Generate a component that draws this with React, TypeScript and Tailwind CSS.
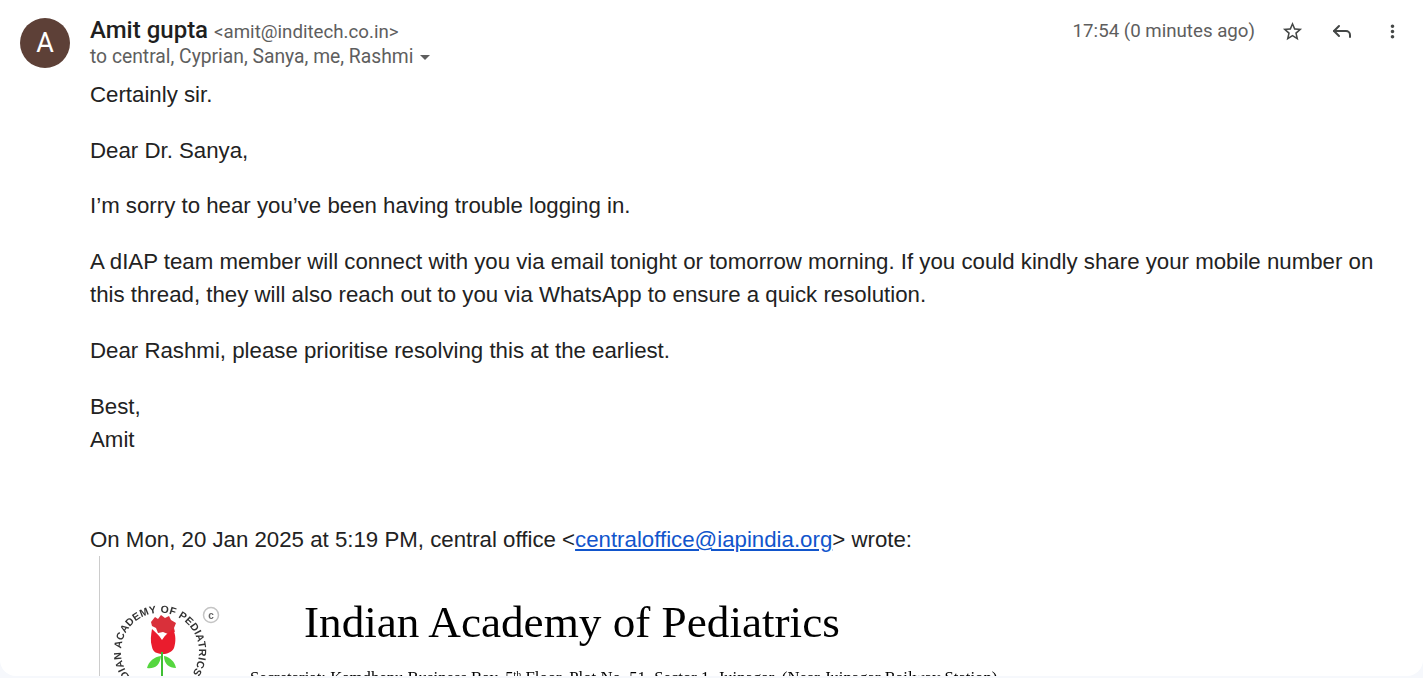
import { Reply } from "lucide-react";

const RoseLogo = () => (
    <svg viewBox="0 0 110 90" className="w-[110px] h-[90px] shrink-0 mt-1">
        <defs>
            <path id="ring" d="M 24 82 A 39 39 0 1 1 68 82" fill="none" />
        </defs>
        <text fontFamily="Liberation Sans, sans-serif" fontWeight="700" fontSize="10.5" fill="#333" letterSpacing="0.3">
            <textPath href="#ring">INDIAN ACADEMY OF PEDIATRICS</textPath>
        </text>
        <path d="M37 20l4-5 3 2 3-4 4 3 4-2 2 4 5 3-2 5 1 4-4-1-3 3-5-2-5 1-2-5-4-2z" fill="#d9303a" />
        <path
            d="M38 27c3 3 7 6 10 11 3-5 7-8 11-11 3 6 3 13 1 19-2 4-7 6-11 6-6 0-10-2-11-7-2-6-1-12 0-18z"
            fill="#ea1c2d"
        />
        <path d="M48 50v24" stroke="#3fbf34" strokeWidth="2" />
        <path d="M47 54c-7 1-12 5-14 12 7 1 13-2 14-12zM50 54c6 1 11 6 12 12-7 0-12-4-12-12z" fill="#55d63f" />
        <circle cx="97" cy="13" r="7.5" fill="#fff" stroke="#c4c4c4" strokeWidth="1.5" />
        <text x="97" y="16.5" textAnchor="middle" fontSize="10" fontWeight="700" fill="#666" fontFamily="Liberation Sans, sans-serif">
            c
        </text>
    </svg>
);

const IconBox = ({ children }: { children: React.ReactNode }) => (
    <div className="w-[50px] h-[26px] flex items-center justify-center text-[#444746]">{children}</div>
);

const App = () => {
    return (
        <div className="h-[678px] overflow-hidden bg-[#f6f8fc] font-['Liberation_Sans',sans-serif]">
            <div className="h-[676px] overflow-hidden rounded-b-2xl bg-white flex gap-5 pl-5 pr-[6px] pt-[18px]">
                <div className="w-[50px] h-[50px] shrink-0 rounded-full bg-[#5d4037] flex items-center justify-center text-white text-[27px] font-['Roboto',sans-serif]">
                    A
                </div>
                <div className="flex-1 min-w-0">
                    <div className="flex justify-between">
                        <div className="font-['Roboto',sans-serif]">
                            <div className="flex items-baseline gap-[6px] h-[25px]">
                                <span className="text-[24px] font-medium leading-[25px] text-[#1f1f1f]">Amit gupta</span>
                                <span className="text-[18.7px] text-[#5e5e5e]">&lt;amit@inditech.co.in&gt;</span>
                            </div>
                            <div className="flex items-center h-[25px] mt-[2px] text-[19.3px] text-[#5e5e5e]">
                                to central, Cyprian, Sanya, me, Rashmi
                                <span className="ml-[7px] border-x-[5px] border-t-[5px] border-x-transparent border-t-[#5e5e5e]" />
                            </div>
                        </div>
                        <div className="flex items-center h-[26px] text-[#5e5e5e]">
                            <span className="font-['Roboto',sans-serif] text-[18.7px] mr-[12px]">17:54 (0 minutes ago)</span>
                            <IconBox>
                                <svg viewBox="0 0 24 24" className="w-[23px] h-[23px]" fill="currentColor">
                                    <path d="M22 9.24l-7.19-.62L12 2 9.19 8.63 2 9.24l5.46 4.73L5.82 21 12 17.27 18.18 21l-1.63-7.03L22 9.24zM12 15.4l-3.76 2.27 1-4.28-3.32-2.88 4.38-.38L12 6.1l1.71 4.04 4.38.38-3.32 2.88 1 4.28L12 15.4z" />
                                </svg>
                            </IconBox>
                            <IconBox>
                                <Reply size={24} strokeWidth={2} />
                            </IconBox>
                            <IconBox>
                                <svg viewBox="0 0 24 24" className="w-[21px] h-[21px]" fill="currentColor">
                                    <path d="M12 8c1.1 0 2-.9 2-2s-.9-2-2-2-2 .9-2 2 .9 2 2 2zm0 2c-1.1 0-2 .9-2 2s.9 2 2 2 2-.9 2-2-.9-2-2-2zm0 6c-1.1 0-2 .9-2 2s.9 2 2 2 2-.9 2-2-.9-2-2-2z" />
                                </svg>
                            </IconBox>
                        </div>
                    </div>
                    <div className="text-[22.25px] leading-[33px] text-[#222222] mt-[8px] pr-[15px]">
                        <p>Certainly sir.</p>
                        <p className="mt-[23px]">Dear Dr. Sanya,</p>
                        <p className="mt-[22px]">I’m sorry to hear you’ve been having trouble logging in.</p>
                        <p className="mt-[23px]">
                            A dIAP team member will connect with you via email tonight or tomorrow morning. If you could kindly share your mobile number on this thread, they will also reach out to you via WhatsApp to ensure a quick resolution.
                        </p>
                        <p className="mt-[23px]">Dear Rashmi, please prioritise resolving this at the earliest.</p>
                        <p className="mt-[23px]">
                            Best,
                            <br />
                            Amit
                        </p>
                        <p className="mt-[67px]">
                            On Mon, 20 Jan 2025 at 5:19 PM, central office &lt;
                            <a href="#" className="text-[#1155cc] underline">
                                centraloffice@iapindia.org
                            </a>
                            &gt; wrote:
                        </p>
                    </div>
                    <div className="ml-[9px] border-l border-[#cccccc] h-[140px] pl-[14px] pt-[42px] flex font-['Liberation_Serif',serif] text-black">
                        <div className="flex blur-[0.4px]">
                            <RoseLogo />
                            <div className="ml-[26px]">
                                <div className="text-[45.2px] leading-[48px] ml-[54px] whitespace-nowrap">Indian Academy of Pediatrics</div>
                                <div className="text-[16.7px] leading-[18px] mt-[23px] whitespace-nowrap">
                                    Secretariat: Kamdhenu Business Bay, 5<sup className="text-[10px]">th</sup> Floor, Plot No. 51, Sector 1, Juinagar, (Near Juinagar Railway Station)
                                </div>
                            </div>
                        </div>
                    </div>
                </div>
            </div>
        </div>
    );
};

export default App;
